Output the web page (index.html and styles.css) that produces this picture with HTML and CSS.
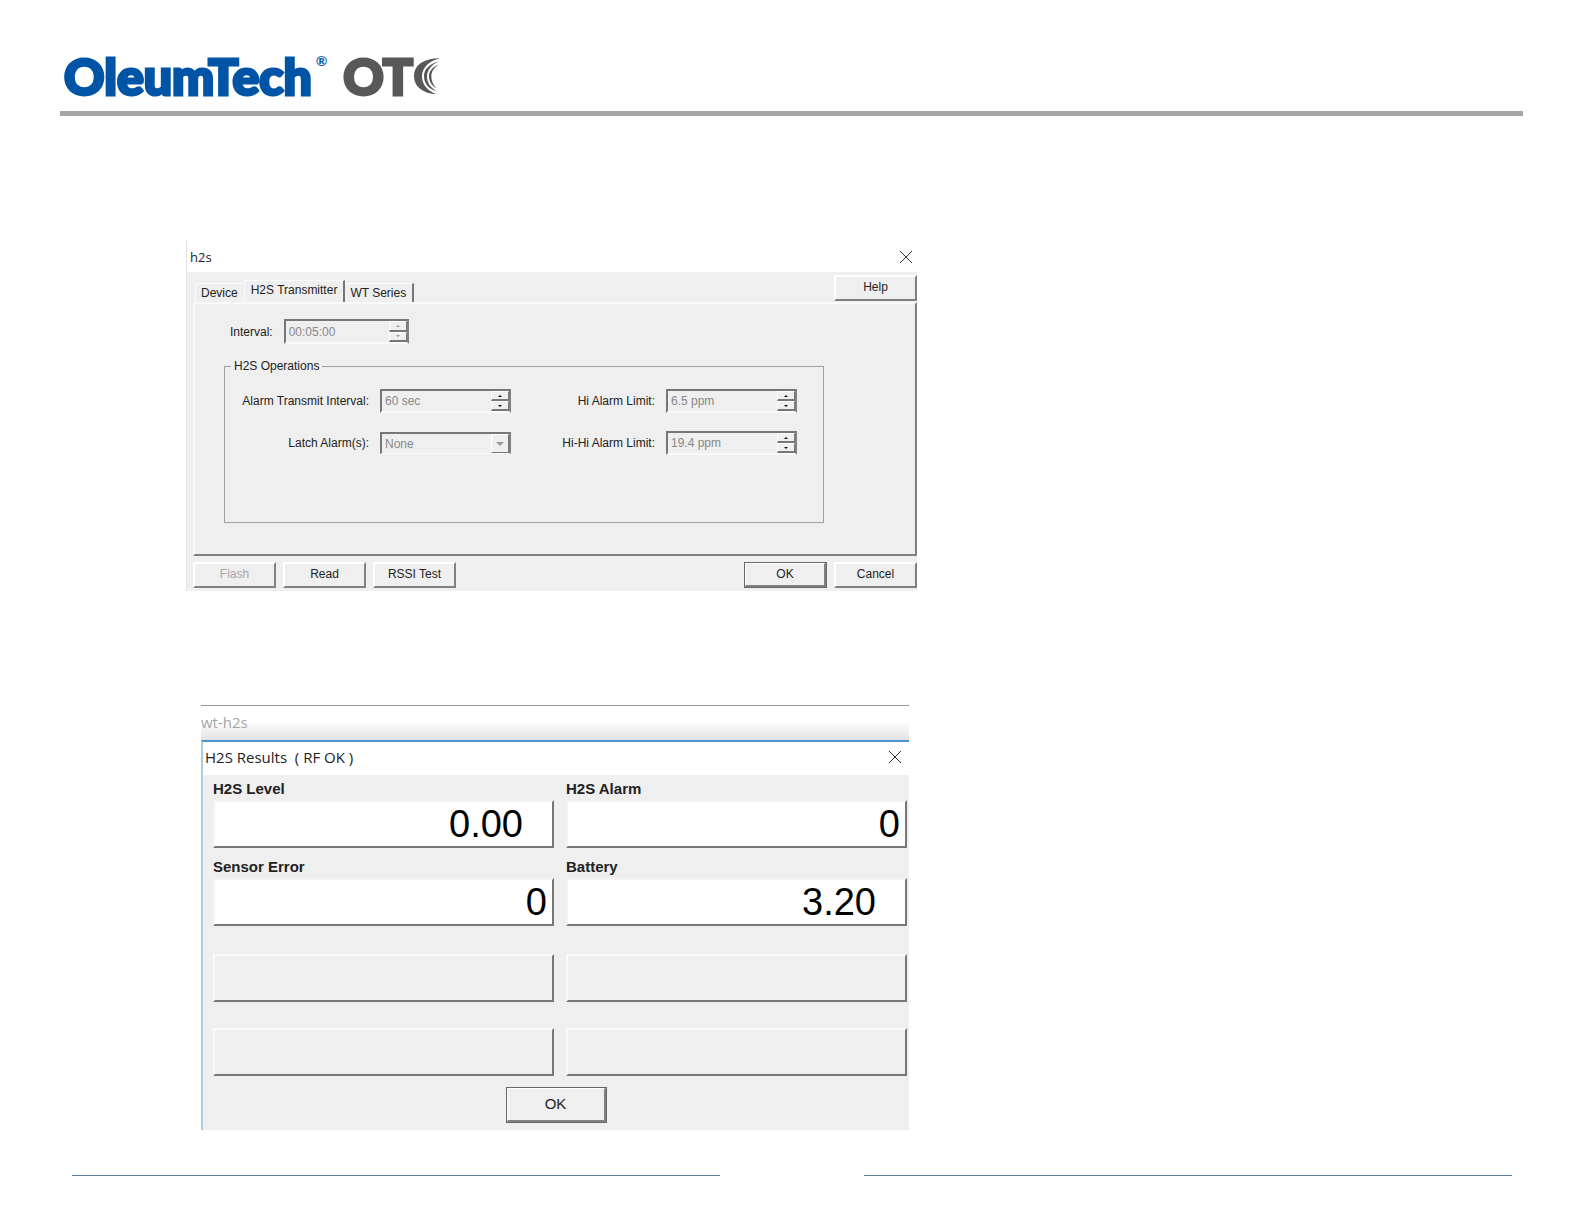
FILE: index.html
```html
<!DOCTYPE html>
<html lang="en">
<head>
<meta charset="utf-8">
<title>OleumTech OTC</title>
<link rel="stylesheet" href="styles.css">
</head>
<body>
<header class="masthead">
  <span class="brand">OleumTech<sup class="reg">®</sup></span>
  <span class="product">OT<svg class="waves" viewBox="0 0 78 110" aria-hidden="true"><path d="M77 0C30 0 0 20 0 54c0 32 28 52 68 54C42 98 24 80 24 54 24 28 46 8 77 0z"/><path d="M74 9C44 18 30 34 30 54c0 22 14 38 38 45C50 88 39 74 39 54c0-18 13-34 35-45z"/><path d="M74 19C55 27 45 39 45 54c0 16 8 28 23 36C57 80 52 68 52 54c0-14 8-25 22-35z"/></svg></span>
</header>

<main class="content">
  <section class="dialog" aria-label="h2s">
    <div class="titlebar">
      <h1 class="title title-small">h2s</h1>
      <button class="close" aria-label="Close"><svg viewBox="0 0 14 14"><path d="M1 1l12 12M13 1L1 13"/></svg></button>
    </div>
    <div class="dialog-body">
      <div class="tabrow">
        <div class="tabs" role="tablist">
          <button class="tab tab-first" role="tab">Device</button>
          <button class="tab tab-active" role="tab" aria-selected="true">H2S Transmitter</button>
          <button class="tab tab-edge" role="tab">WT Series</button>
        </div>
        <button class="btn">Help</button>
      </div>
      <div class="panel">
        <div class="interval">
          <label for="interval">Interval:</label>
          <div class="spin spin-off">
            <input id="interval" type="text" value="00:05:00" disabled>
            <div class="arrows"><button class="up" aria-label="Increase" disabled></button><button class="down" aria-label="Decrease" disabled></button></div>
          </div>
        </div>
        <fieldset class="group">
          <legend>H2S Operations</legend>
          <div class="fields">
            <label for="transmit">Alarm Transmit Interval:</label>
            <div class="spin">
              <input id="transmit" type="text" value="60 sec" disabled>
              <div class="arrows"><button class="up" aria-label="Increase"></button><button class="down" aria-label="Decrease"></button></div>
            </div>
            <label for="hi">Hi Alarm Limit:</label>
            <div class="spin">
              <input id="hi" type="text" value="6.5 ppm" disabled>
              <div class="arrows"><button class="up" aria-label="Increase"></button><button class="down" aria-label="Decrease"></button></div>
            </div>
            <label for="latch">Latch Alarm(s):</label>
            <div class="combo">
              <select id="latch" disabled><option>None</option></select>
              <span class="drop"></span>
            </div>
            <label for="hihi">Hi-Hi Alarm Limit:</label>
            <div class="spin">
              <input id="hihi" type="text" value="19.4 ppm" disabled>
              <div class="arrows"><button class="up" aria-label="Increase"></button><button class="down" aria-label="Decrease"></button></div>
            </div>
          </div>
        </fieldset>
      </div>
      <div class="actions">
        <button class="btn" disabled>Flash</button>
        <button class="btn">Read</button>
        <button class="btn">RSSI Test</button>
        <button class="btn btn-default">OK</button>
        <button class="btn">Cancel</button>
      </div>
    </div>
  </section>

  <section class="results" aria-label="H2S Results">
    <div class="parent-title">wt-h2s</div>
    <div class="window">
      <div class="titlebar">
        <h2 class="title">H2S Results&nbsp; ( RF OK )</h2>
        <button class="close" aria-label="Close"><svg viewBox="0 0 14 14"><path d="M1 1l12 12M13 1L1 13"/></svg></button>
      </div>
      <div class="results-body">
        <div class="readouts">
          <div class="readout"><label for="level">H2S Level</label><output id="level" class="lcd lcd-decimal">0.00</output></div>
          <div class="readout"><label for="alarm">H2S Alarm</label><output id="alarm" class="lcd">0</output></div>
          <div class="readout"><label for="error">Sensor Error</label><output id="error" class="lcd">0</output></div>
          <div class="readout"><label for="battery">Battery</label><output id="battery" class="lcd lcd-decimal">3.20</output></div>
          <div class="readout"><output class="lcd lcd-empty"></output></div>
          <div class="readout"><output class="lcd lcd-empty"></output></div>
          <div class="readout"><output class="lcd lcd-empty"></output></div>
          <div class="readout"><output class="lcd lcd-empty"></output></div>
        </div>
        <button class="btn btn-default btn-large">OK</button>
      </div>
    </div>
  </section>
</main>

<footer class="footer"><hr><hr></footer>
</body>
</html>
```

FILE: styles.css
```css
* { box-sizing: border-box; }

body {
  margin: 0;
  min-height: 100vh;
  display: flex;
  flex-direction: column;
  background: #fff;
  color: #222;
  font: 12px/16px "Liberation Sans", Arial, sans-serif;
}

button, input, select { font: inherit; color: inherit; margin: 0; border-radius: 0; }

/* Header */
.masthead {
  display: flex;
  align-items: flex-end;
  gap: 16px;
  height: 116px;
  margin: 0 61px 0 60px;
  padding: 0 4px 5px;
  border-bottom: 5px solid #a6a6a6;
  font: 900 50px/60px Lato, sans-serif;
}
.brand { display: flex; color: #0054a6; -webkit-text-stroke: 3px; }
.reg { font: 700 14px/14px Lato, sans-serif; margin: 8px 0 0 4px; -webkit-text-stroke: 0; }
.product { display: flex; color: #58585a; -webkit-text-stroke: 3px; }
.waves { width: 26px; height: 37px; margin: 12px 0 0 1px; fill: currentColor; }

/* Shared window parts */
.content { flex: 1; padding: 124px 186px 0; }
.titlebar { display: flex; align-items: center; justify-content: space-between; }
.title { margin: 0; font: 400 15px/20px "Open Sans", sans-serif; color: #222; }
.title-small { font-size: 13px; }
.close { border: 0; padding: 0; background: none; width: 14px; height: 14px; }
.close svg { display: block; width: 14px; height: 14px; fill: none; stroke: #333; }

.btn {
  width: 83px;
  height: 26px;
  padding: 0 0 2px;
  background: #efefef;
  border: 2px solid;
  border-color: #fff #808080 #808080 #fff;
  color: #222;
}
.btn:disabled { color: #a8a8a8; }
.btn-default { outline: 1px solid #666; outline-offset: -1px; border-width: 2px 3px 3px 2px; }
.btn-large { width: 101px; height: 36px; font-size: 15px; }

/* Transmitter dialog */
.dialog { max-width: 731px; border-left: 1px solid #e4e4e4; }
.dialog .titlebar { height: 32px; padding: 2px 4px 0 3px; }
.dialog-body { background: #efefef; padding: 3px 0 3px 6px; }
.tabrow { display: flex; justify-content: space-between; height: 27px; }
.tabs { display: flex; align-items: flex-end; padding-left: 2px; }
.tab {
  height: 19px;
  padding: 0 6px 0 5px;
  border: 0 solid #777;
  border-top: 1px solid #fafafa;
  background: none;
}
.tab-first { border-left: 1px solid #fafafa; }
.tab-active { height: 22px; padding: 0 6px 3px; border-left: 1px solid #fafafa; border-right: 2px solid #777; }
.tab-edge { border-right: 2px solid #777; }
.panel {
  padding: 15px 91px 31px 29px;
  border: 2px solid;
  border-color: #fafafa #808080 #808080 #fafafa;
}
.interval { display: flex; align-items: center; gap: 11px; padding-left: 6px; }
.interval .spin { width: 125px; height: 25px; }

.spin, .combo {
  display: flex;
  width: 131px;
  height: 24px;
  background: #efefef;
  border: 2px solid;
  border-color: #777 #808080 #fafafa #777;
  color: #888;
}
.combo { height: 22px; border-bottom-width: 1px; }
.spin input, .combo select {
  flex: 1;
  min-width: 0;
  padding: 0 3px;
  border: 0;
  background: none;
  appearance: none;
  color: #888;
  opacity: 1;
}
.arrows { display: flex; flex-direction: column; width: 18px; }
.arrows button {
  flex: 1;
  display: flex;
  align-items: center;
  justify-content: center;
  padding: 0;
  border: 1px solid;
  border-color: #fff #777 #777 #fff;
  border-bottom-width: 2px;
  background: #efefef;
  color: #111;
}
.spin-off .arrows button { color: #999; }
.arrows button::before { content: ""; border: 2px solid transparent; }
.arrows .up::before { border-top-width: 0; border-bottom-color: currentColor; }
.arrows .down::before { border-bottom-width: 0; border-top-color: currentColor; }
.drop {
  display: flex;
  align-items: center;
  justify-content: center;
  width: 18px;
  border: 1px solid;
  border-color: #fff #777 #777 #fff;
}
.drop::before { content: ""; border: 4px solid transparent; border-bottom-width: 0; border-top-color: #999; }

.group {
  margin: 14px 0 0;
  padding: 15px 26px 67px 0;
  border: 1px solid #a0a0a0;
}
.group legend { margin-left: 6px; padding: 0 3px; }
.fields {
  display: grid;
  grid-template-columns: 144px 131px 1fr 131px;
  grid-auto-rows: 24px;
  gap: 18px 11px;
  align-items: center;
}
.fields label { text-align: right; }

.actions { display: flex; gap: 7px; margin-top: 6px; }
.actions .btn-default { margin-left: auto; }

/* Results window */
.results { max-width: 723px; margin-top: 114px; padding-left: 15px; }
.parent-title {
  height: 35px;
  border-top: 1px solid #999;
  background: linear-gradient(#fff 45%, #e2e2e2);
  color: #a6a6a6;
  font: 15px/32px "Open Sans", sans-serif;
}
.window { border-top: 2px solid #4a96d0; border-left: 2px solid #a9d0e2; }
.window .titlebar { height: 33px; padding: 0 7px 3px 2px; }
.results-body {
  display: flex;
  flex-direction: column;
  align-items: center;
  gap: 11px;
  padding-bottom: 7px;
  background: #efefef;
}
.readouts {
  align-self: stretch;
  display: grid;
  grid-template-columns: 1fr 1fr;
  grid-template-rows: 73px 78px 76px 74px;
  column-gap: 12px;
  margin: 0 2px 0 10px;
}
.readout { display: flex; flex-direction: column; justify-content: flex-end; }
.readout label { font: 700 15px/20px "Liberation Sans", Arial, sans-serif; margin-bottom: 1px; }
.lcd {
  height: 48px;
  padding-right: 5px;
  background: #fff;
  border: 2px solid;
  border-color: #f4f4f4 #777 #777 #f4f4f4;
  color: #000;
  font: 38px/44px "Liberation Sans", Arial, sans-serif;
  text-align: right;
}
.lcd-decimal { padding-right: 29px; }
.lcd-empty { background: #efefef; border-color: #fafafa #777 #777 #fafafa; }

/* Footer rules */
.footer { display: flex; justify-content: space-between; gap: 144px; margin: 45px 72px 48px; }
.footer hr { flex: 1; margin: 0; border: 0; border-top: 1px solid #607f9f; }
```
